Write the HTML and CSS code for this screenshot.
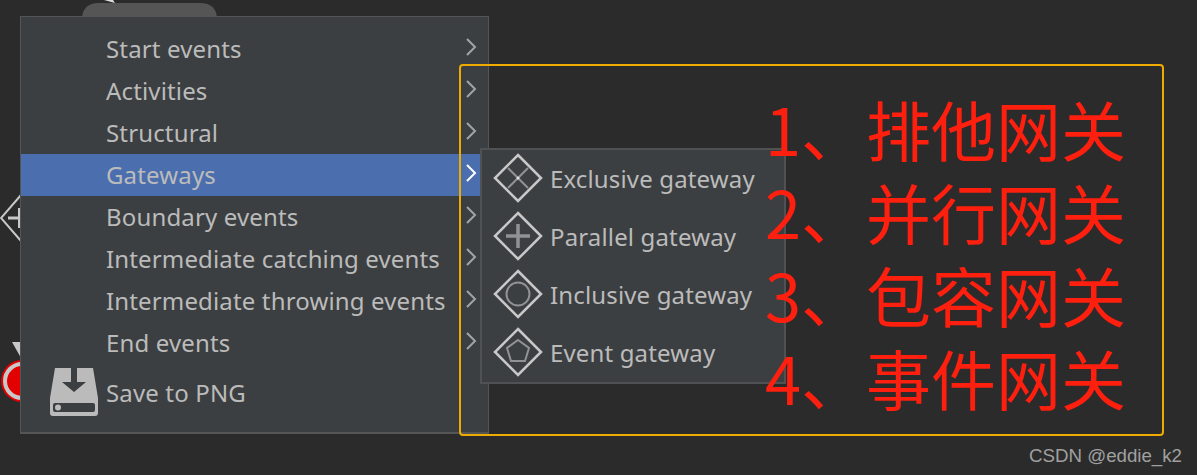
FILE: index.html
```html
<!DOCTYPE html>
<html lang="en">
<head>
    <meta charset="UTF-8">
    <title>Gateways menu</title>
    <link rel="stylesheet" href="styles.css">
</head>
<body>
    <div class="canvas">
        <!-- bits of the diagram peeking out behind the menu -->
        <svg class="diagram" width="1197" height="475" viewBox="0 0 1197 475">
            <path d="M104 0 L115 3 L113 0Z" fill="#dddddd"/>
            <path d="M82 22 V20 Q82 3 99 3 H200 Q217 3 217 20 V22Z" fill="#555555"/>
            <path d="M21 195 L1 218 L21 241" fill="none" stroke="#c8c8c8" stroke-width="2"/>
            <path d="M8 218 H20" fill="none" stroke="#c8c8c8" stroke-width="3"/>
            <path d="M19 208 V228" fill="none" stroke="#c8c8c8" stroke-width="2"/>
            <path d="M12 342 H21 V358Z" fill="#c8c8c8"/>
            <circle cx="22" cy="381" r="21" fill="#e30000"/>
            <circle cx="22" cy="381" r="17" fill="#e30000" stroke="#c8c8c8" stroke-width="4"/>
        </svg>

        <div class="menu">
            <div class="menu-item"><span>Start events</span><svg class="arrow" width="12" height="18" viewBox="0 0 12 18"><path d="M2 1 L10 9 L2 17"/></svg></div>
            <div class="menu-item"><span>Activities</span><svg class="arrow" width="12" height="18" viewBox="0 0 12 18"><path d="M2 1 L10 9 L2 17"/></svg></div>
            <div class="menu-item"><span>Structural</span><svg class="arrow" width="12" height="18" viewBox="0 0 12 18"><path d="M2 1 L10 9 L2 17"/></svg></div>
            <div class="menu-item selected"><span>Gateways</span><svg class="arrow" width="12" height="18" viewBox="0 0 12 18"><path d="M2 1 L10 9 L2 17"/></svg></div>
            <div class="menu-item"><span>Boundary events</span><svg class="arrow" width="12" height="18" viewBox="0 0 12 18"><path d="M2 1 L10 9 L2 17"/></svg></div>
            <div class="menu-item"><span>Intermediate catching events</span><svg class="arrow" width="12" height="18" viewBox="0 0 12 18"><path d="M2 1 L10 9 L2 17"/></svg></div>
            <div class="menu-item"><span>Intermediate throwing events</span><svg class="arrow" width="12" height="18" viewBox="0 0 12 18"><path d="M2 1 L10 9 L2 17"/></svg></div>
            <div class="menu-item"><span>End events</span><svg class="arrow" width="12" height="18" viewBox="0 0 12 18"><path d="M2 1 L10 9 L2 17"/></svg></div>
            <div class="menu-item save">
                <svg class="save-icon" width="48" height="48" viewBox="0 0 48 48">
                    <path d="M5 0 H21 V14 H12 L24 24 L36 14 H27 V0 H43 L48 30 V45 Q48 48 45 48 H3 Q0 48 0 45 V30Z" fill="#bbbbbb"/>
                    <rect x="3" y="35" width="42" height="9" rx="2" fill="#3c3f41"/>
                    <circle cx="8" cy="39.500" r="3" fill="#bbbbbb"/>
                </svg>
                <span>Save to PNG</span>
            </div>
        </div>

        <div class="submenu">
            <div class="submenu-item">
                <svg class="gateway" width="50" height="50" viewBox="0 0 50 50"><path class="diamond" d="M25 2 L48 25 L25 48 L2 25Z"/><path class="mark" d="M15 15 L35 35 M35 15 L15 35"/><circle class="dot" cx="25" cy="25" r="1.500"/></svg>
                <span>Exclusive gateway</span>
            </div>
            <div class="submenu-item">
                <svg class="gateway" width="50" height="50" viewBox="0 0 50 50"><path class="diamond" d="M25 2 L48 25 L25 48 L2 25Z"/><path class="mark thick" d="M25 13 V37 M13 25 H37"/></svg>
                <span>Parallel gateway</span>
            </div>
            <div class="submenu-item">
                <svg class="gateway" width="50" height="50" viewBox="0 0 50 50"><path class="diamond" d="M25 2 L48 25 L25 48 L2 25Z"/><circle class="mark" cx="25" cy="25" r="11.500"/></svg>
                <span>Inclusive gateway</span>
            </div>
            <div class="submenu-item">
                <svg class="gateway" width="50" height="50" viewBox="0 0 50 50"><path class="diamond" d="M25 2 L48 25 L25 48 L2 25Z"/><path class="mark" d="M25 13 L36 21 L32 34 H18 L14 21Z"/></svg>
                <span>Event gateway</span>
            </div>
        </div>

        <div class="frame"></div>

        <div class="notes">
            <div>1、排他网关</div>
            <div>2、并行网关</div>
            <div>3、包容网关</div>
            <div>4、事件网关</div>
        </div>

        <div class="watermark">CSDN @eddie_k2</div>
    </div>
</body>
</html>
```

FILE: styles.css
```css
html, body {
    margin: 0;
    padding: 0;
    background: #2b2b2b;
}

.canvas {
    position: relative;
    width: 1197px;
    height: 475px;
    overflow: hidden;
    font-family: "Noto Sans", sans-serif;
}

.diagram {
    position: absolute;
    left: 0;
    top: 0;
}

.menu {
    position: absolute;
    left: 20px;
    top: 16px;
    width: 467px;
    height: 415px;
    background: #3c3f41;
    border: 1px solid #555555;
    border-bottom-width: 2px;
    color: #bbbbbb;
    font-size: 24px;
    letter-spacing: 0.15px;
}

.menu-item {
    display: flex;
    align-items: center;
    justify-content: space-between;
    box-sizing: border-box;
    height: 42px;
    padding: 0 11px 2px 85px;
}

.menu-item:first-child {
    margin-top: 11px;
}

.menu-item .arrow {
    margin-top: -2px;
}

.menu-item.selected {
    background: #4b6eaf;
    margin-right: 7px;
    padding-right: 4px;
}

.menu-item.selected .arrow path {
    stroke: #ffffff;
}

.arrow path {
    fill: none;
    stroke: #a0a4a8;
    stroke-width: 2;
}

.menu-item.save {
    justify-content: flex-start;
    gap: 8px;
    height: 48px;
    margin-top: 5px;
    padding-left: 29px;
}

.submenu {
    position: absolute;
    left: 480px;
    top: 148px;
    width: 306px;
    height: 236px;
    box-sizing: border-box;
    padding: 0 0 0 11px;
    background: #3c3f41;
    border: 2px solid #4f5153;
    color: #bbbbbb;
    font-size: 24px;
    letter-spacing: 0.15px;
}

.submenu-item {
    display: flex;
    align-items: center;
    gap: 7px;
    box-sizing: border-box;
    height: 58px;
    padding-bottom: 2px;
}

.diamond {
    fill: none;
    stroke: #c8c8c8;
    stroke-width: 2.500;
}

.mark {
    fill: none;
    stroke: #909294;
    stroke-width: 2;
}

.mark.thick {
    stroke-width: 3.500;
}

.dot {
    fill: #e0e0e0;
}

.frame {
    position: absolute;
    left: 459px;
    top: 64px;
    width: 701px;
    height: 368px;
    border: 2px solid #eeab00;
    border-radius: 4px;
}

.notes {
    position: absolute;
    left: 765px;
    top: 87px;
    color: #ff1f0f;
    font-family: "Noto Sans CJK SC", sans-serif;
    font-size: 65px;
    line-height: 83px;
    white-space: nowrap;
}

.watermark {
    position: absolute;
    right: 15px;
    bottom: 8px;
    color: #a0a0a0;
    font-family: "Liberation Sans", sans-serif;
    font-size: 18.700px;
}
```
